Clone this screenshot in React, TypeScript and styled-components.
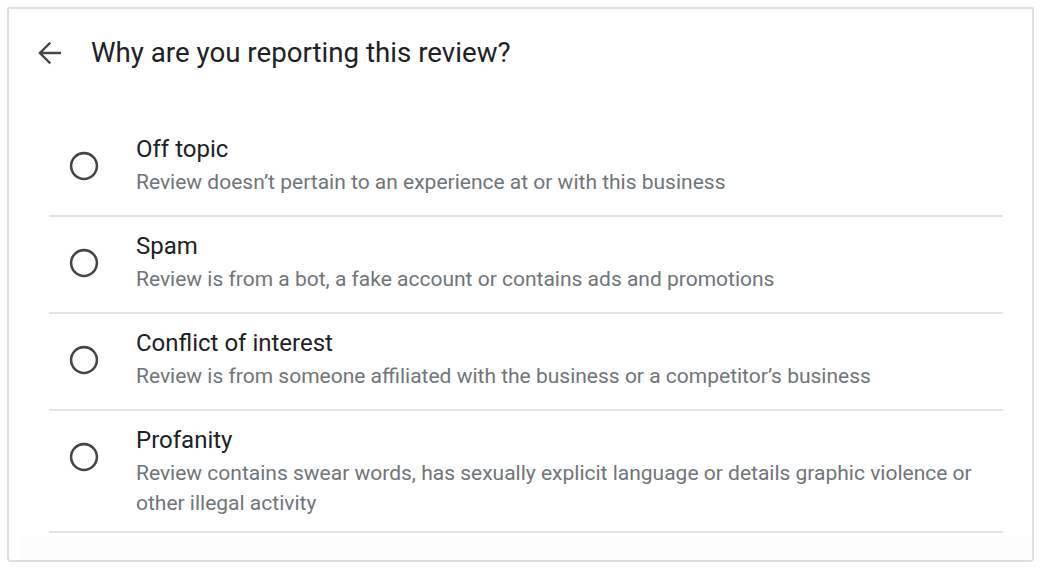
import styled, { createGlobalStyle } from 'styled-components'

const GlobalStyle = createGlobalStyle`
  *, *::before, *::after {
    box-sizing: border-box;
  }
  body {
    margin: 0;
    background: #ffffff;
    font-family: Roboto, "Liberation Sans", Arial, sans-serif;
    -webkit-font-smoothing: antialiased;
  }
`

const Page = styled.div`
  width: 1040px;
  height: 570px;
  padding: 7px 6px 8px 7px;
`

const Card = styled.div`
  display: flex;
  flex-direction: column;
  height: 100%;
  border: 2px solid #e0e0e0;
  border-radius: 2px 2px 4px 4px;
  background: #ffffff;
`

const Header = styled.div`
  display: flex;
  align-items: center;
  gap: 24px;
  padding: 26px 0 0 22px;
`

const BackButton = styled.button`
  display: flex;
  align-items: center;
  justify-content: center;
  width: 36px;
  height: 36px;
  padding: 0;
  border: none;
  background: none;
  color: #444746;
  cursor: pointer;
`

const Title = styled.h1`
  margin: 0;
  font-size: 27.7px;
  font-weight: 400;
  line-height: 36px;
  color: #202124;
`

const List = styled.div`
  display: flex;
  flex-direction: column;
  margin: 49px 29px 0 40px;
`

const Row = styled.label`
  display: flex;
  align-items: flex-start;
  gap: 34px;
  min-height: 97px;
  padding: 11px 24px 13px 17px;
  border-bottom: 2px solid #e1e3e6;
  cursor: pointer;
`

const Radio = styled.span`
  display: flex;
  align-items: center;
  justify-content: center;
  flex: none;
  width: 36px;
  height: 36px;
  margin-top: 17px;
  color: #444746;
`

const Texts = styled.div`
  display: flex;
  flex-direction: column;
`

const OptionTitle = styled.div`
  font-size: 24px;
  line-height: 36px;
  color: #202124;
`

const OptionDesc = styled.div`
  font-size: 21px;
  line-height: 30px;
  color: #70757a;
`

const Footer = styled.div`
  flex: 1;
  margin: 4px 0 0 11px;
  background: #fdfdfd;
`

const options = [
  {
    title: 'Off topic',
    desc: 'Review doesn’t pertain to an experience at or with this business',
  },
  {
    title: 'Spam',
    desc: 'Review is from a bot, a fake account or contains ads and promotions',
  },
  {
    title: 'Conflict of interest',
    desc: 'Review is from someone affiliated with the business or a competitor’s business',
  },
  {
    title: 'Profanity',
    desc: 'Review contains swear words, has sexually explicit language or details graphic violence or other illegal activity',
  },
]

const ArrowBack = () => (
  <svg width="36" height="36" viewBox="0 0 24 24" fill="currentColor">
    <path d="M20 11.2H7.83l5.59-5.59L12.3 4.5 4.8 12l7.5 7.5 1.12-1.12-5.59-5.58H20v-1.6z" />
  </svg>
)

const RadioIcon = () => (
  <svg width="36" height="36" viewBox="0 0 24 24" fill="none">
    <circle cx="12" cy="12" r="8.6" stroke="currentColor" strokeWidth="1.7" />
  </svg>
)

export default function App() {
  return (
    <>
      <GlobalStyle />
      <Page>
        <Card>
          <Header>
            <BackButton aria-label="Back">
              <ArrowBack />
            </BackButton>
            <Title>Why are you reporting this review?</Title>
          </Header>
          <List>
            {options.map((o) => (
              <Row key={o.title}>
                <Radio>
                  <RadioIcon />
                </Radio>
                <Texts>
                  <OptionTitle>{o.title}</OptionTitle>
                  <OptionDesc>{o.desc}</OptionDesc>
                </Texts>
              </Row>
            ))}
          </List>
          <Footer />
        </Card>
      </Page>
    </>
  )
}
